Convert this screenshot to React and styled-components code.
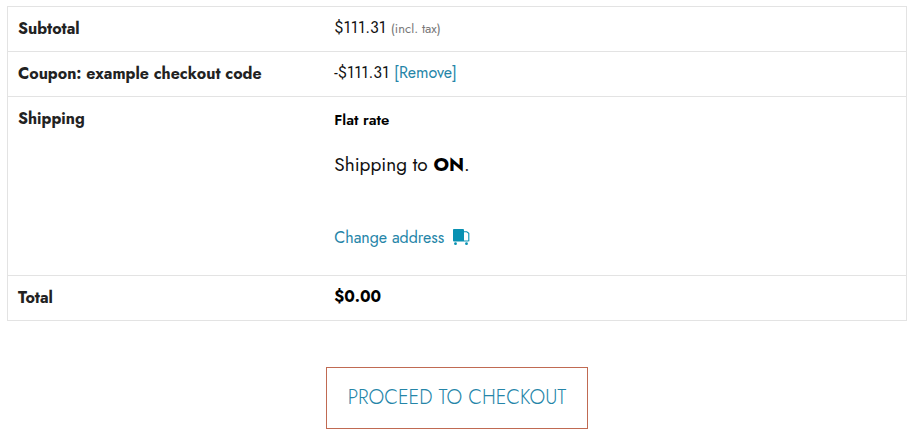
import React from "react";
import styled, { createGlobalStyle } from "styled-components";

const GlobalStyle = createGlobalStyle`
  *, *::before, *::after { box-sizing: border-box; }
  body { margin: 0; background: #fff; color: #111; font-family: Jost, Lato, "Open Sans", sans-serif; font-size: 16px; line-height: 24px; }
`;
const Page = styled.main`
  display: flex;
  flex-direction: column;
  align-items: center;
  gap: 46px;
  padding: 6px 10px 6px 7px;
`;
const Totals = styled.table`
  width: 100%;
  border: 1px solid #e3e3e3;
  border-collapse: separate;
  border-spacing: 0;
  table-layout: fixed;
`;
const Row = styled.tr`
  &:not(:last-child) > * { border-bottom: 1px solid #e3e3e3; }
`;
const Label = styled.th`
  width: 35%;
  padding: 10px;
  color: #222;
  text-align: left;
  vertical-align: top;
  font-weight: 700;
`;
const Value = styled.td`
  padding: 9px 12px 11px;
  vertical-align: top;
`;
const ShippingValue = styled(Value)`
  padding-bottom: 25px;
`;
const Note = styled.small`
  color: #777;
  font-size: 13px;
  line-height: 16px;
`;
const Link = styled.a`
  color: #2585a8;
  text-decoration: none;
`;
const AddressLink = styled(Link)`
  display: flex;
  width: fit-content;
  align-items: center;
  gap: 8px;
`;
const Strong = styled.strong`
  color: #000;
  font-weight: 700;
`;
const Method = styled.div`
  padding-top: 2px;
  color: #000;
  font-size: 15px;
  font-weight: 600;
`;
const Destination = styled.p`
  margin: 19px 0 47px;
  font-size: 19px;
  line-height: 28px;
`;
const Checkout = styled.a`
  padding: 15px 21px;
  border: 1px solid #c06a52;
  color: #2585a8;
  font-size: 20px;
  font-weight: 300;
  line-height: 30px;
  text-decoration: none;
`;
const TruckIcon = styled.svg`
  display: block;
  width: 18px;
  height: 18px;
`;
const Truck = () => (
  <TruckIcon viewBox="0 0 18 18" fill="#0891b2" aria-hidden="true">
    <path d="M1.5 0h9.5q1 0 1 1v11.5H2q-1 0-1-1V.5z" />
    <path d="M12 2.7h2.8l2 1.5v7.5L15.5 12H12" fill="none" stroke="#0891b2" strokeWidth="1.1" />
    <circle cx="3.5" cy="14.7" r="1.4" />
    <circle cx="14.5" cy="14.7" r="1.4" />
  </TruckIcon>
);

export default function App() {
  return (
    <>
      <GlobalStyle />
      <Page>
        <Totals>
          <tbody>
            <Row>
              <Label scope="row">Subtotal</Label>
              <Value>$111.31 <Note>(incl. tax)</Note></Value>
            </Row>
            <Row>
              <Label scope="row">Coupon: example checkout code</Label>
              <Value>-$111.31 <Link href="#remove">[Remove]</Link></Value>
            </Row>
            <Row>
              <Label scope="row">Shipping</Label>
              <ShippingValue>
                <Method>Flat rate</Method>
                <Destination>Shipping to <Strong>ON</Strong>.</Destination>
                <AddressLink href="#address">Change address <Truck /></AddressLink>
              </ShippingValue>
            </Row>
            <Row>
              <Label scope="row">Total</Label>
              <Value><Strong>$0.00</Strong></Value>
            </Row>
          </tbody>
        </Totals>
        <Checkout href="#checkout">PROCEED TO CHECKOUT</Checkout>
      </Page>
    </>
  );
}
